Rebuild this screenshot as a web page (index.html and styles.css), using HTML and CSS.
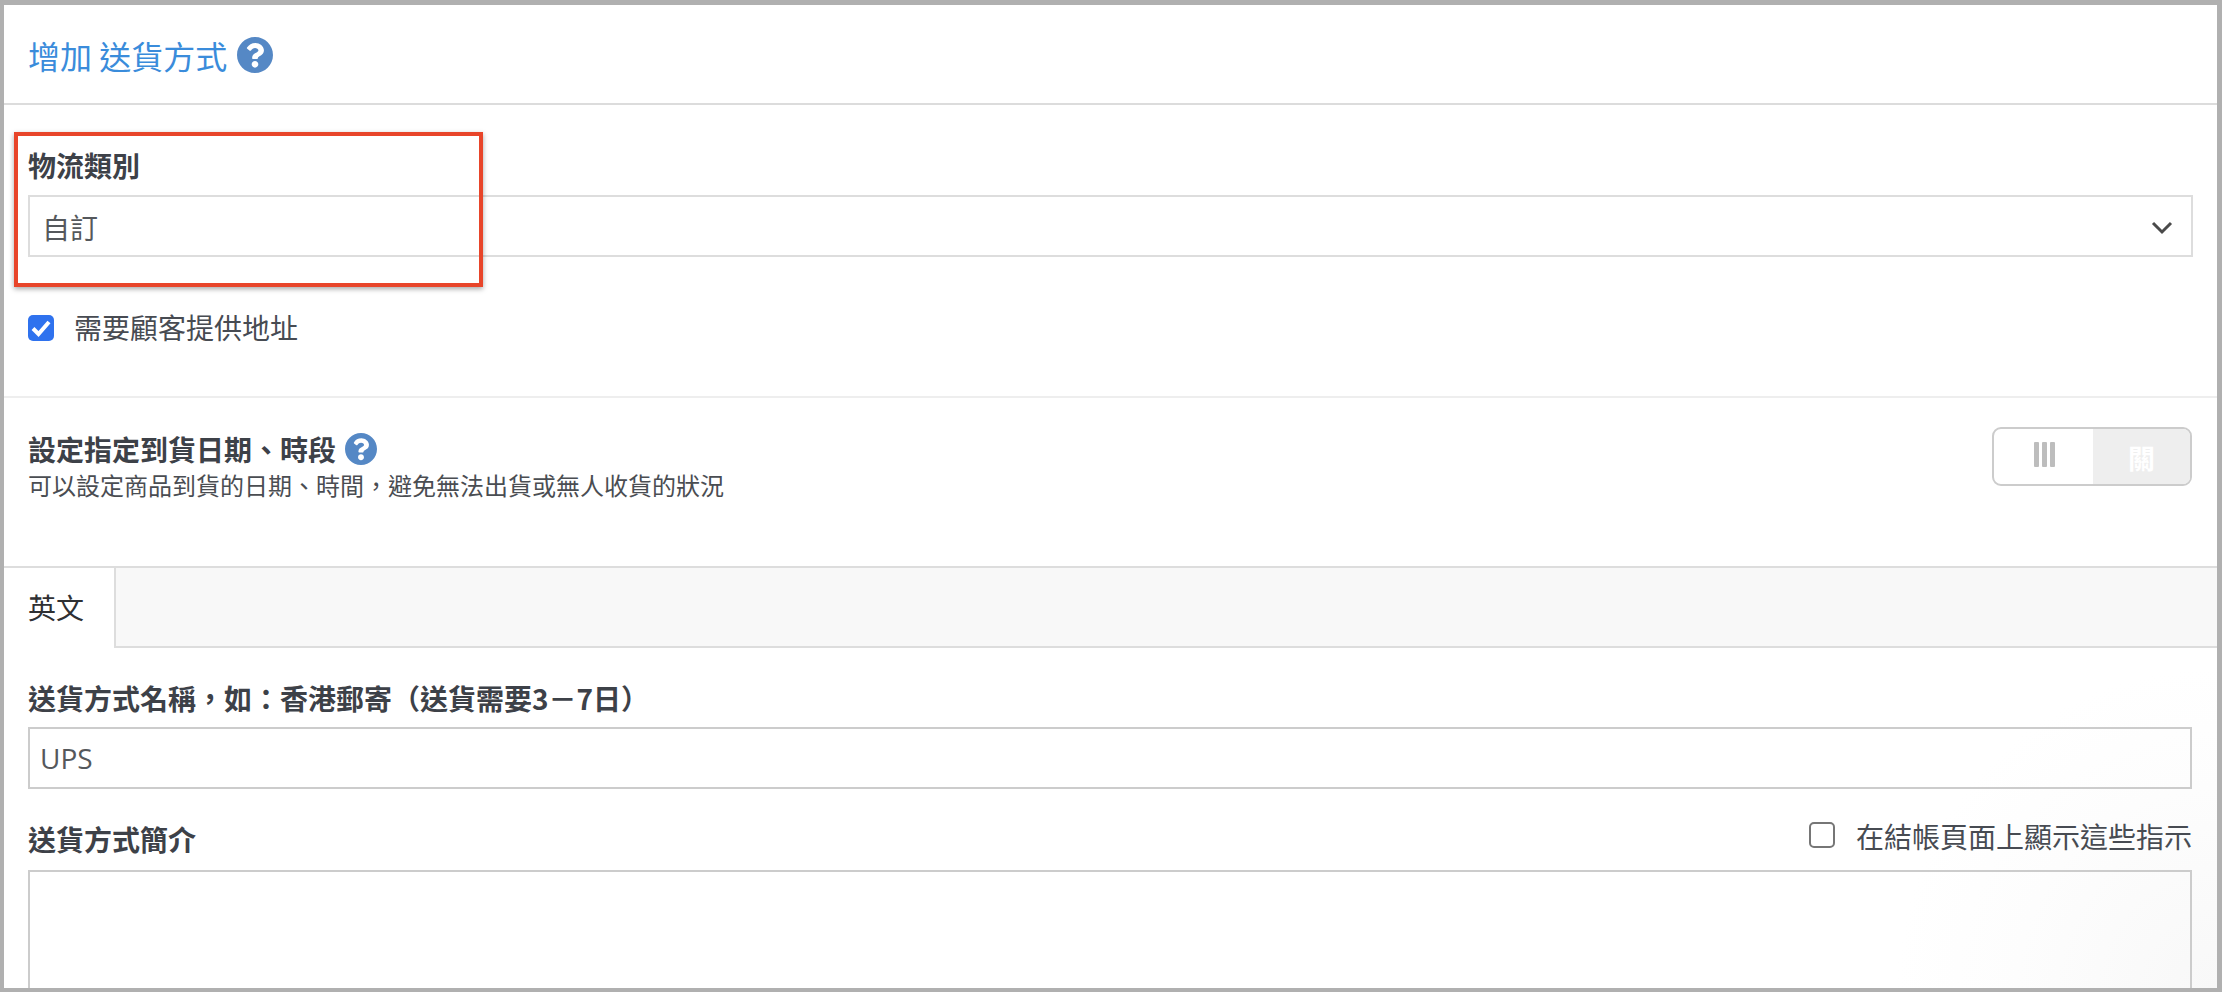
FILE: index.html
```html
<!DOCTYPE html>
<html lang="zh-Hant">
<head>
<meta charset="utf-8">
<title>增加 送貨方式</title>
<link rel="stylesheet" href="styles.css">
</head>
<body>
<div class="frame">
  <header class="head">
    <h1 class="title">增加 送貨方式</h1>
    <svg class="help help-lg" viewBox="8 8 496 496"><path d="M504 256c0 136.997-111.043 248-248 248S8 392.997 8 256C8 119.083 119.043 8 256 8s248 111.083 248 248zM262.655 90c-54.497 0-89.255 22.957-116.549 63.758-3.536 5.286-2.353 12.415 2.715 16.258l34.699 26.31c5.205 3.947 12.621 3.008 16.665-2.122 17.864-22.658 30.113-35.797 57.303-35.797 20.429 0 45.698 13.148 45.698 32.958 0 14.976-12.363 22.667-32.534 33.976C247.128 238.528 216 254.941 216 296v4c0 6.627 5.373 12 12 12h56c6.627 0 12-5.373 12-12v-1.333c0-28.462 83.186-29.647 83.186-106.667 0-58.002-60.165-102-116.531-102zM256 338c-25.365 0-46 20.635-46 46 0 25.364 20.635 46 46 46s46-20.636 46-46c0-25.365-20.635-46-46-46z"/></svg>
  </header>

  <section class="logistics">
    <div class="label">物流類別</div>
    <div class="select">
      <span class="select-value">自訂</span>
      <svg class="chevron" viewBox="0 0 22 14"><path d="M2 2l9 9 9-9"/></svg>
    </div>
    <div class="check-row">
      <span class="check check-on"><svg viewBox="0 0 26 26"><path d="M5 13.5l5.5 5.5L21 7"/></svg></span>
      <span class="check-text">需要顧客提供地址</span>
    </div>
    <div class="highlight"></div>
  </section>

  <section class="schedule">
    <div class="schedule-text">
      <div class="schedule-title">
        <span class="label">設定指定到貨日期、時段</span>
        <svg class="help help-sm" viewBox="8 8 496 496"><path d="M504 256c0 136.997-111.043 248-248 248S8 392.997 8 256C8 119.083 119.043 8 256 8s248 111.083 248 248zM262.655 90c-54.497 0-89.255 22.957-116.549 63.758-3.536 5.286-2.353 12.415 2.715 16.258l34.699 26.31c5.205 3.947 12.621 3.008 16.665-2.122 17.864-22.658 30.113-35.797 57.303-35.797 20.429 0 45.698 13.148 45.698 32.958 0 14.976-12.363 22.667-32.534 33.976C247.128 238.528 216 254.941 216 296v4c0 6.627 5.373 12 12 12h56c6.627 0 12-5.373 12-12v-1.333c0-28.462 83.186-29.647 83.186-106.667 0-58.002-60.165-102-116.531-102zM256 338c-25.365 0-46 20.635-46 46 0 25.364 20.635 46 46 46s46-20.636 46-46c0-25.365-20.635-46-46-46z"/></svg>
      </div>
      <div class="schedule-sub">可以設定商品到貨的日期、時間，避免無法出貨或無人收貨的狀況</div>
    </div>
    <div class="toggle">
      <div class="toggle-on"><i></i><i></i><i></i></div>
      <div class="toggle-off">關</div>
    </div>
  </section>

  <nav class="tabs">
    <div class="tab">英文</div>
    <div class="tab-rest"></div>
  </nav>

  <section class="fields">
    <div class="label">送貨方式名稱，如：香港郵寄（送貨需要3－7日）</div>
    <input class="text-input" type="text" value="UPS">
    <div class="desc-row">
      <div class="label desc-label">送貨方式簡介</div>
      <div class="check-row-right">
        <span class="check"></span>
        <span class="check-text-right">在結帳頁面上顯示這些指示</span>
      </div>
    </div>
    <textarea class="textarea"></textarea>
  </section>
</div>
</body>
</html>
```
FILE: styles.css
```css
* { box-sizing: border-box; }
html, body { margin: 0; padding: 0; background: #fff; }
body {
  font-family: "Noto Sans CJK TC", "Noto Sans", sans-serif;
  color: #474b52;
}
.frame {
  width: 2222px;
  height: 992px;
  overflow: hidden;
  border-style: solid;
  border-color: #b0b0b0;
  border-width: 5px 5px 4px 4px;
  background: radial-gradient(circle at 100% 100%, #f8f8f8 0, #fdfdfd 200px, #fff 320px);
}
.head {
  height: 100px;
  padding-left: 24px;
  display: flex;
  align-items: center;
  gap: 10px;
  border-bottom: 2px solid #dcdcdc;
}
.title {
  margin: 2px 0 0;
  font-size: 32px;
  font-weight: 400;
  line-height: 40px;
  color: #3a8cdb;
  white-space: pre;
}
.help { fill: #5588c5; display: block; flex: none; }
.help-lg { width: 36px; height: 36px; margin-top: 2px; }
.help-sm { width: 32px; height: 32px; }
.label {
  font-size: 28px;
  line-height: 30px;
  font-weight: 700;
  color: #3d4148;
}
.logistics {
  position: relative;
  height: 293px;
  padding: 45px 24px 0;
  border-bottom: 2px solid #eeeeee;
}
.select {
  margin-top: 15px;
  height: 62px;
  border: 2px solid #dddddd;
  padding: 0 18px 0 12px;
  display: flex;
  align-items: center;
  justify-content: space-between;
  font-size: 28px;
  color: #55585c;
}
.select-value { margin-top: 2px; }
.chevron { width: 22px; height: 14px; fill: none; stroke: #4a4a4a; stroke-width: 3; margin-top: 4px; }
.check-row {
  margin-top: 58px;
  display: flex;
  align-items: center;
  height: 26px;
  gap: 20px;
  font-size: 28px;
}
.check-text { margin-top: -2px; }
.check-text-right { margin-top: 1px; }
.check {
  width: 26px;
  height: 26px;
  flex: none;
  border: 2px solid #767676;
  border-radius: 5px;
  background: #fff;
  display: block;
}
.check-on { border: 0; background: #2f72ee; }
.check-on svg { display: block; width: 26px; height: 26px; fill: none; stroke: #fff; stroke-width: 4; }
.highlight {
  position: absolute;
  left: 10px;
  top: 27px;
  width: 469px;
  height: 155px;
  border: 4px solid #e8452a;
  box-shadow: 0 2px 5px rgba(0, 0, 0, .35);
  pointer-events: none;
}
.schedule {
  height: 168px;
  padding: 29px 25px 0 24px;
  display: flex;
  justify-content: space-between;
  align-items: flex-start;
}
.schedule-text { padding-top: 5px; }
.schedule-title { display: flex; align-items: center; gap: 9px; height: 34px; }
.schedule-sub { margin-top: 2px; font-size: 24px; line-height: 34px; color: #4a4d52; }
.toggle {
  width: 200px;
  height: 59px;
  border: 2px solid #cccccc;
  border-radius: 9px;
  overflow: hidden;
  display: flex;
  background: #fff;
}
.toggle-on { width: 99px; display: flex; justify-content: center; padding-top: 13px; padding-left: 2px; gap: 3px; }
.toggle-on i { display: block; width: 5px; height: 25px; background: #bdbdbd; border-radius: 1px; }
.toggle-off {
  flex: 1;
  background: #eeeeee;
  color: #fff;
  font-size: 27px;
  font-weight: 700;
  line-height: 58px;
  text-align: center;
}
.tabs {
  height: 82px;
  display: flex;
  border-top: 2px solid #dddddd;
}
.tab {
  width: 110px;
  padding-left: 24px;
  font-size: 28px;
  line-height: 78px;
  color: #2f3033;
}
.tab-rest {
  flex: 1;
  background: #f8f8f8;
  border-left: 2px solid #dddddd;
  border-bottom: 2px solid #dddddd;
}
.fields { padding: 35px 25px 0 24px; }
.text-input {
  display: block;
  width: 100%;
  height: 62px;
  margin: 14px 0 0;
  border: 2px solid #cccccc;
  border-radius: 0;
  outline: 0;
  padding: 0 10px;
  background: transparent;
  font-family: "Open Sans", "Noto Sans", sans-serif;
  font-size: 28px;
  color: #55585c;
}
.desc-row {
  margin-top: 33px;
  height: 48px;
  display: flex;
  justify-content: space-between;
  align-items: flex-start;
}
.desc-label { padding-top: 2px; }
.check-row-right {
  display: flex;
  align-items: center;
  gap: 21px;
  height: 26px;
  font-size: 28px;
}
.textarea {
  display: block;
  width: 100%;
  height: 160px;
  margin: 0;
  border: 2px solid #cccccc;
  border-radius: 0;
  outline: 0;
  resize: none;
  background: transparent;
}
```
